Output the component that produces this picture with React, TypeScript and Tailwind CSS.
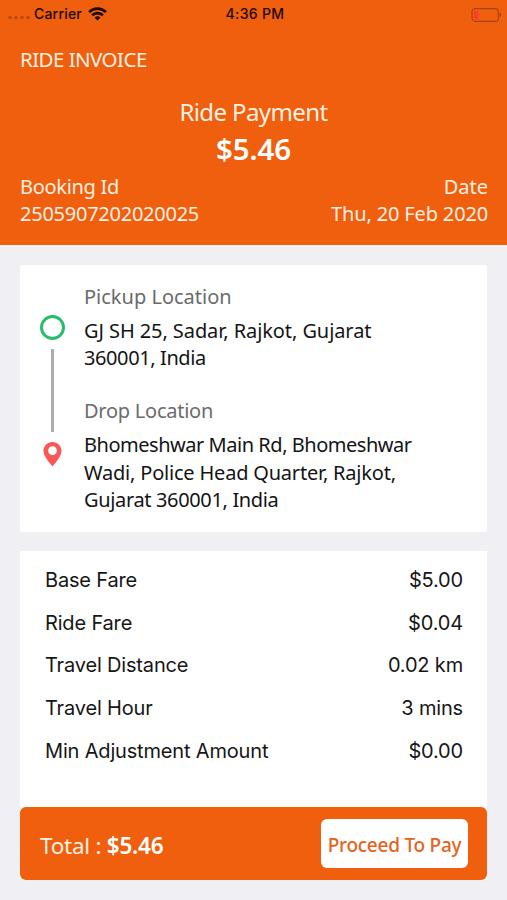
const fares = [
    { label: 'Base Fare', value: '$5.00' },
    { label: 'Ride Fare', value: '$0.04' },
    { label: 'Travel Distance', value: '0.02 km' },
    { label: 'Travel Hour', value: '3 mins' },
    { label: 'Min Adjustment Amount', value: '$0.00' },
];

const WifiIcon = () => (
    <svg className="ml-[6px] h-[14px] w-[19px]" viewBox="0 0 19 14" fill="none" stroke="#1c0a02">
        <path d="M1.1 5.1a12 12 0 0 1 16.8 0" strokeWidth="2.7" />
        <path d="M4.1 8.3a7.7 7.7 0 0 1 10.8 0" strokeWidth="2.6" />
        <path d="M9.5 13.6 6.6 10.7a4.1 4.1 0 0 1 5.8 0z" fill="#1c0a02" stroke="none" />
    </svg>
);

const BatteryIcon = () => (
    <svg className="h-[14px] w-[31px]" viewBox="0 0 31 14">
        <rect x="1" y="0.6" width="26.4" height="12.8" rx="3.4" fill="none" stroke="#a3430f" strokeWidth="1.1" />
        <rect x="2.8" y="2.4" width="4.6" height="9.2" rx="1.6" fill="#ff3b30" />
        <path d="M28.6 4.8v4.4c1-.3 1.6-1.2 1.6-2.2s-.6-1.9-1.6-2.2z" fill="#a3430f" />
    </svg>
);

const StatusBar = () => (
    <div className="grid h-[26px] grid-cols-3 items-center pr-[5px] pl-2 font-['Inter',sans-serif] text-[14px] font-medium text-[#1c0a02]">
        <div className="flex items-center pb-[2px]">
            <div className="mt-[8px] mr-[4.5px] flex gap-[2.5px]">
                {[0, 1, 2, 3].map((dot) => (
                    <span key={dot} className="h-[3.5px] w-[3.5px] rounded-full bg-[#bf4b0d]" />
                ))}
            </div>
            <span className="tracking-[0.2px]">Carrier</span>
            <WifiIcon />
        </div>
        <div className="pb-[2px] text-center tracking-[0.35px]">4:36 PM</div>
        <div className="flex justify-end">
            <BatteryIcon />
        </div>
    </div>
);

function App() {
    return (
        <div className="flex h-[900px] w-[507px] flex-col overflow-hidden bg-[#efeff4] font-['Noto_Sans',sans-serif] text-[20px] leading-[27px] whitespace-nowrap">

            {/* Header */}
            <header className="h-[245px] bg-[#ef5f0e] text-[#fff0e2]">
                <StatusBar />
                <h1 className="mt-[20px] pl-[20px] text-[20.5px] tracking-[-0.55px]">RIDE INVOICE</h1>
                <div className="mt-[20px] text-center">
                    <div className="h-[38px] text-[24px] leading-[38px] tracking-[-0.6px]">Ride Payment</div>
                    <div className="h-[36px] text-[29.5px] leading-[36px] font-semibold tracking-[-0.1px] text-white">$5.46</div>
                </div>
                <div className="mt-[6px] flex justify-between pr-[19px] pl-[20px]">
                    <div>
                        <div className="tracking-[-0.3px]">Booking Id</div>
                        <div className="tracking-[-0.25px]">2505907202020025</div>
                    </div>
                    <div className="text-right">
                        <div>Date</div>
                        <div className="tracking-[-0.15px]">Thu, 20 Feb 2020</div>
                    </div>
                </div>
            </header>

            {/* Route */}
            <section className="mx-[20px] mt-[20px] flex h-[267px] rounded-[2px] bg-white text-[#141414]">
                <div className="flex w-[64px] flex-col items-center pt-[50px]">
                    <span className="h-[25px] w-[25px] rounded-full border-[3px] border-[#26bd6b]" />
                    <span className="mt-[9px] h-[83px] w-[3px] bg-[#adadad]" />
                    <svg className="mt-[9px] h-[26px] w-[19px]" viewBox="0 0 19 26">
                        <path
                            d="M9.5 1C4.5 1 .5 4.9.5 9.9c0 6.2 9 15.3 9 15.3s9-9.1 9-15.3C18.5 4.9 14.5 1 9.5 1zm0 4.2a4.4 4.4 0 1 1 0 8.8 4.4 4.4 0 0 1 0-8.8z"
                            fill="#fa5757"
                        />
                    </svg>
                </div>
                <div className="pt-[18px]">
                    <div className="text-[#6b6b6b]">Pickup Location</div>
                    <div className="mt-[7px]">
                        <div className="tracking-[-0.08px]">GJ SH 25, Sadar, Rajkot, Gujarat</div>
                        <div className="tracking-[-0.4px]">360001, India</div>
                    </div>
                    <div className="mt-[26px] tracking-[-0.25px] text-[#6b6b6b]">Drop Location</div>
                    <div className="mt-[7px] leading-[27.5px]">
                        <div className="tracking-[-0.47px]">Bhomeshwar Main Rd, Bhomeshwar</div>
                        <div className="tracking-[-0.2px]">Wadi, Police Head Quarter, Rajkot,</div>
                        <div className="tracking-[-0.35px]">Gujarat 360001, India</div>
                    </div>
                </div>
            </section>

            {/* Fare breakdown */}
            <section className="mx-[20px] mt-[19px] h-[329px] bg-white">
                <div className="flex h-[256px] flex-col pt-[8px] pr-[24px] pl-[25px] font-['Inter',sans-serif] tracking-[-0.17px] text-[#161616]">
                    {fares.map((fare) => (
                        <div key={fare.label} className="flex h-[42.8px] items-center justify-between">
                            <span>{fare.label}</span>
                            <span>{fare.value}</span>
                        </div>
                    ))}
                </div>
                <div className="flex h-[73px] items-center justify-between rounded-[6px] bg-[#ef5f0e] pr-[19px] pl-[20px]">
                    <div className="pt-[3px] text-[22.5px] tracking-[-0.25px] text-[#fff0e2]">
                        Total : <span className="font-semibold text-white">$5.46</span>
                    </div>
                    <button className="h-[49px] w-[147px] rounded-[6px] bg-white pt-[4px] text-[19px] font-medium tracking-[-0.25px] text-[#e4641c]">
                        Proceed To Pay
                    </button>
                </div>
            </section>
        </div>
    );
}

export default App;
